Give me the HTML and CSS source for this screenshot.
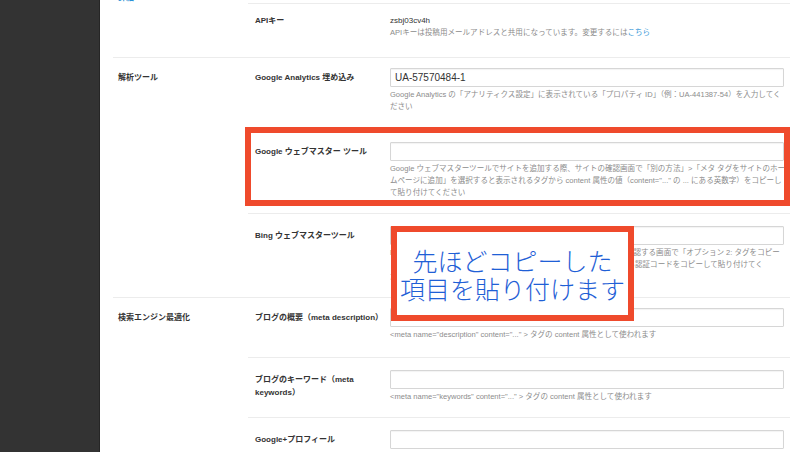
FILE: index.html
```html
<!DOCTYPE html>
<html lang="ja">
<head>
<meta charset="utf-8">
<title>ブログ設定</title>
<link rel="stylesheet" href="styles.css">
</head>
<body>
<div class="app">
  <aside class="sidebar"></aside>
  <main class="content">
    <section class="section section-top">
      <div class="section-label"><a class="link">詳細</a></div>
      <div class="rows">
        <div class="row row-blank"></div>
        <div class="row row-text">
          <div class="row-label">APIキー</div>
          <div class="row-field">
            <div class="value">zsbj03cv4h</div>
            <p class="desc">APIキーは投稿用メールアドレスと共用になっています。変更するには<a class="link link-inline">こちら</a></p>
          </div>
        </div>
      </div>
    </section>

    <section class="section">
      <div class="section-label">解析ツール</div>
      <div class="rows">
        <div class="row">
          <div class="row-label">Google Analytics 埋め込み</div>
          <div class="row-field">
            <input class="input" type="text" value="UA-57570484-1">
            <p class="desc">Google Analytics の「アナリティクス設定」に表示されている「プロパティ ID」（例：UA-441387-54）を入力してく<br>ださい</p>
          </div>
        </div>
        <div class="row">
          <div class="row-label">Google ウェブマスター ツール</div>
          <div class="row-field">
            <input class="input" type="text" value="">
            <p class="desc">Google ウェブマスターツールでサイトを追加する際、サイトの確認画面で「別の方法」&gt;「メタ タグをサイトのホー<br>ムページに追加」を選択すると表示されるタグから content 属性の値（content="..." の ... にある英数字）をコピーし<br>て貼り付けてください</p>
          </div>
        </div>
        <div class="row">
          <div class="row-label">Bing ウェブマスターツール</div>
          <div class="row-field">
            <input class="input" type="text" value="">
            <p class="desc">Bing ウェブマスターツールでサイトを追加した後、サイトの所有権を確認する画面で「オプション 2: タグをコピー<br>して、既定の Web ページに貼り付ける」で表示されるタグに記載してる認証コードをコピーして貼り付けてく<br>ださい</p>
          </div>
        </div>
      </div>
    </section>

    <section class="section">
      <div class="section-label">検索エンジン最適化</div>
      <div class="rows">
        <div class="row">
          <div class="row-label">ブログの概要（meta description）</div>
          <div class="row-field">
            <input class="input" type="text" value="">
            <p class="desc">&lt;meta name="description" content="..." &gt; タグの content 属性として使われます</p>
          </div>
        </div>
        <div class="row">
          <div class="row-label">ブログのキーワード（meta keywords）</div>
          <div class="row-field">
            <input class="input" type="text" value="">
            <p class="desc">&lt;meta name="keywords" content="..." &gt; タグの content 属性として使われます</p>
          </div>
        </div>
        <div class="row">
          <div class="row-label">Google+プロフィール</div>
          <div class="row-field">
            <input class="input" type="text" value="">
          </div>
        </div>
      </div>
    </section>
  </main>
</div>

<div class="mark mark-highlight"></div>
<div class="mark mark-callout">先ほどコピーした<br>項目を貼り付けます</div>
</body>
</html>
```

FILE: styles.css
```css
html, body {
  margin: 0;
  height: 452px;
  overflow: hidden;
  background: #fff;
}

body {
  font-family: "Liberation Sans", "Noto Sans CJK JP", sans-serif;
  color: #333;
}

.app {
  display: flex;
  height: 452px;
}

.sidebar {
  flex: none;
  width: 99px;
  background: #333;
  border-right: 1px solid #262626;
}

.content {
  flex: 1;
  min-width: 0;
  padding: 0 10px 0 13px;
  overflow: hidden;
}

.section {
  display: grid;
  grid-template-columns: 135px 1fr;
  border-top: 1px solid #ececec;
}

.section-top {
  border-top: 0;
  margin-top: -8px;
}

.section-label {
  padding: 13.5px 0 0 5px;
  font-size: 8px;
  font-weight: bold;
  line-height: 12px;
  color: #333;
}

.section-top .section-label {
  padding-top: 0;
}

.link {
  color: #2d91d6;
  font-weight: bold;
  text-decoration: none;
}

.link-inline {
  color: #3a9ad9;
  font-weight: normal;
}

.row {
  display: grid;
  grid-template-columns: 142px 1fr;
  padding: 12px 6px 14px 0;
}

.row:first-child {
  padding-top: 10px;
  padding-bottom: 16px;
}

.row + .row {
  border-top: 1px solid #ececec;
}

.row-blank,
.row-blank:first-child {
  height: 11px;
  padding: 0;
  box-sizing: border-box;
}

.row-text {
  padding: 11px 6px 18px 0;
}

.row-label {
  padding: 3px 10px 0 7px;
  font-size: 8px;
  font-weight: bold;
  line-height: 13px;
  color: #333;
}

.row-text .row-label {
  padding-top: 0;
  line-height: 12px;
}

.row-field {
  min-width: 0;
}

.value {
  font-size: 8px;
  line-height: 12px;
  color: #333;
}

.desc {
  margin: 2px 0 0;
  font-size: 7.55px;
  line-height: 12px;
  color: #8c8c8c;
  white-space: nowrap;
}

.row-text .desc {
  margin-top: 0;
}

.input {
  display: block;
  box-sizing: border-box;
  width: 100%;
  height: 19px;
  margin: 0;
  padding: 0 4px;
  border: 1px solid #d6d6d6;
  border-radius: 1px;
  box-shadow: inset 0 1px 1px rgba(0, 0, 0, 0.05);
  background: #fff;
  font-family: "Liberation Sans", "Noto Sans CJK JP", sans-serif;
  font-size: 10px;
  color: #333;
  outline: none;
}

.mark {
  position: absolute;
  box-sizing: border-box;
  border: 6px solid #ef4a2c;
}

.mark-highlight {
  left: 245px;
  top: 127px;
  width: 545px;
  height: 79px;
}

.mark-callout {
  left: 391px;
  top: 226px;
  width: 243px;
  height: 95px;
  background: #fff;
  display: flex;
  align-items: center;
  justify-content: center;
  text-align: center;
  font-family: "Noto Sans CJK JP", sans-serif;
  font-weight: 300;
  font-size: 25px;
  line-height: 28px;
  color: #1f60d6;
}
```
